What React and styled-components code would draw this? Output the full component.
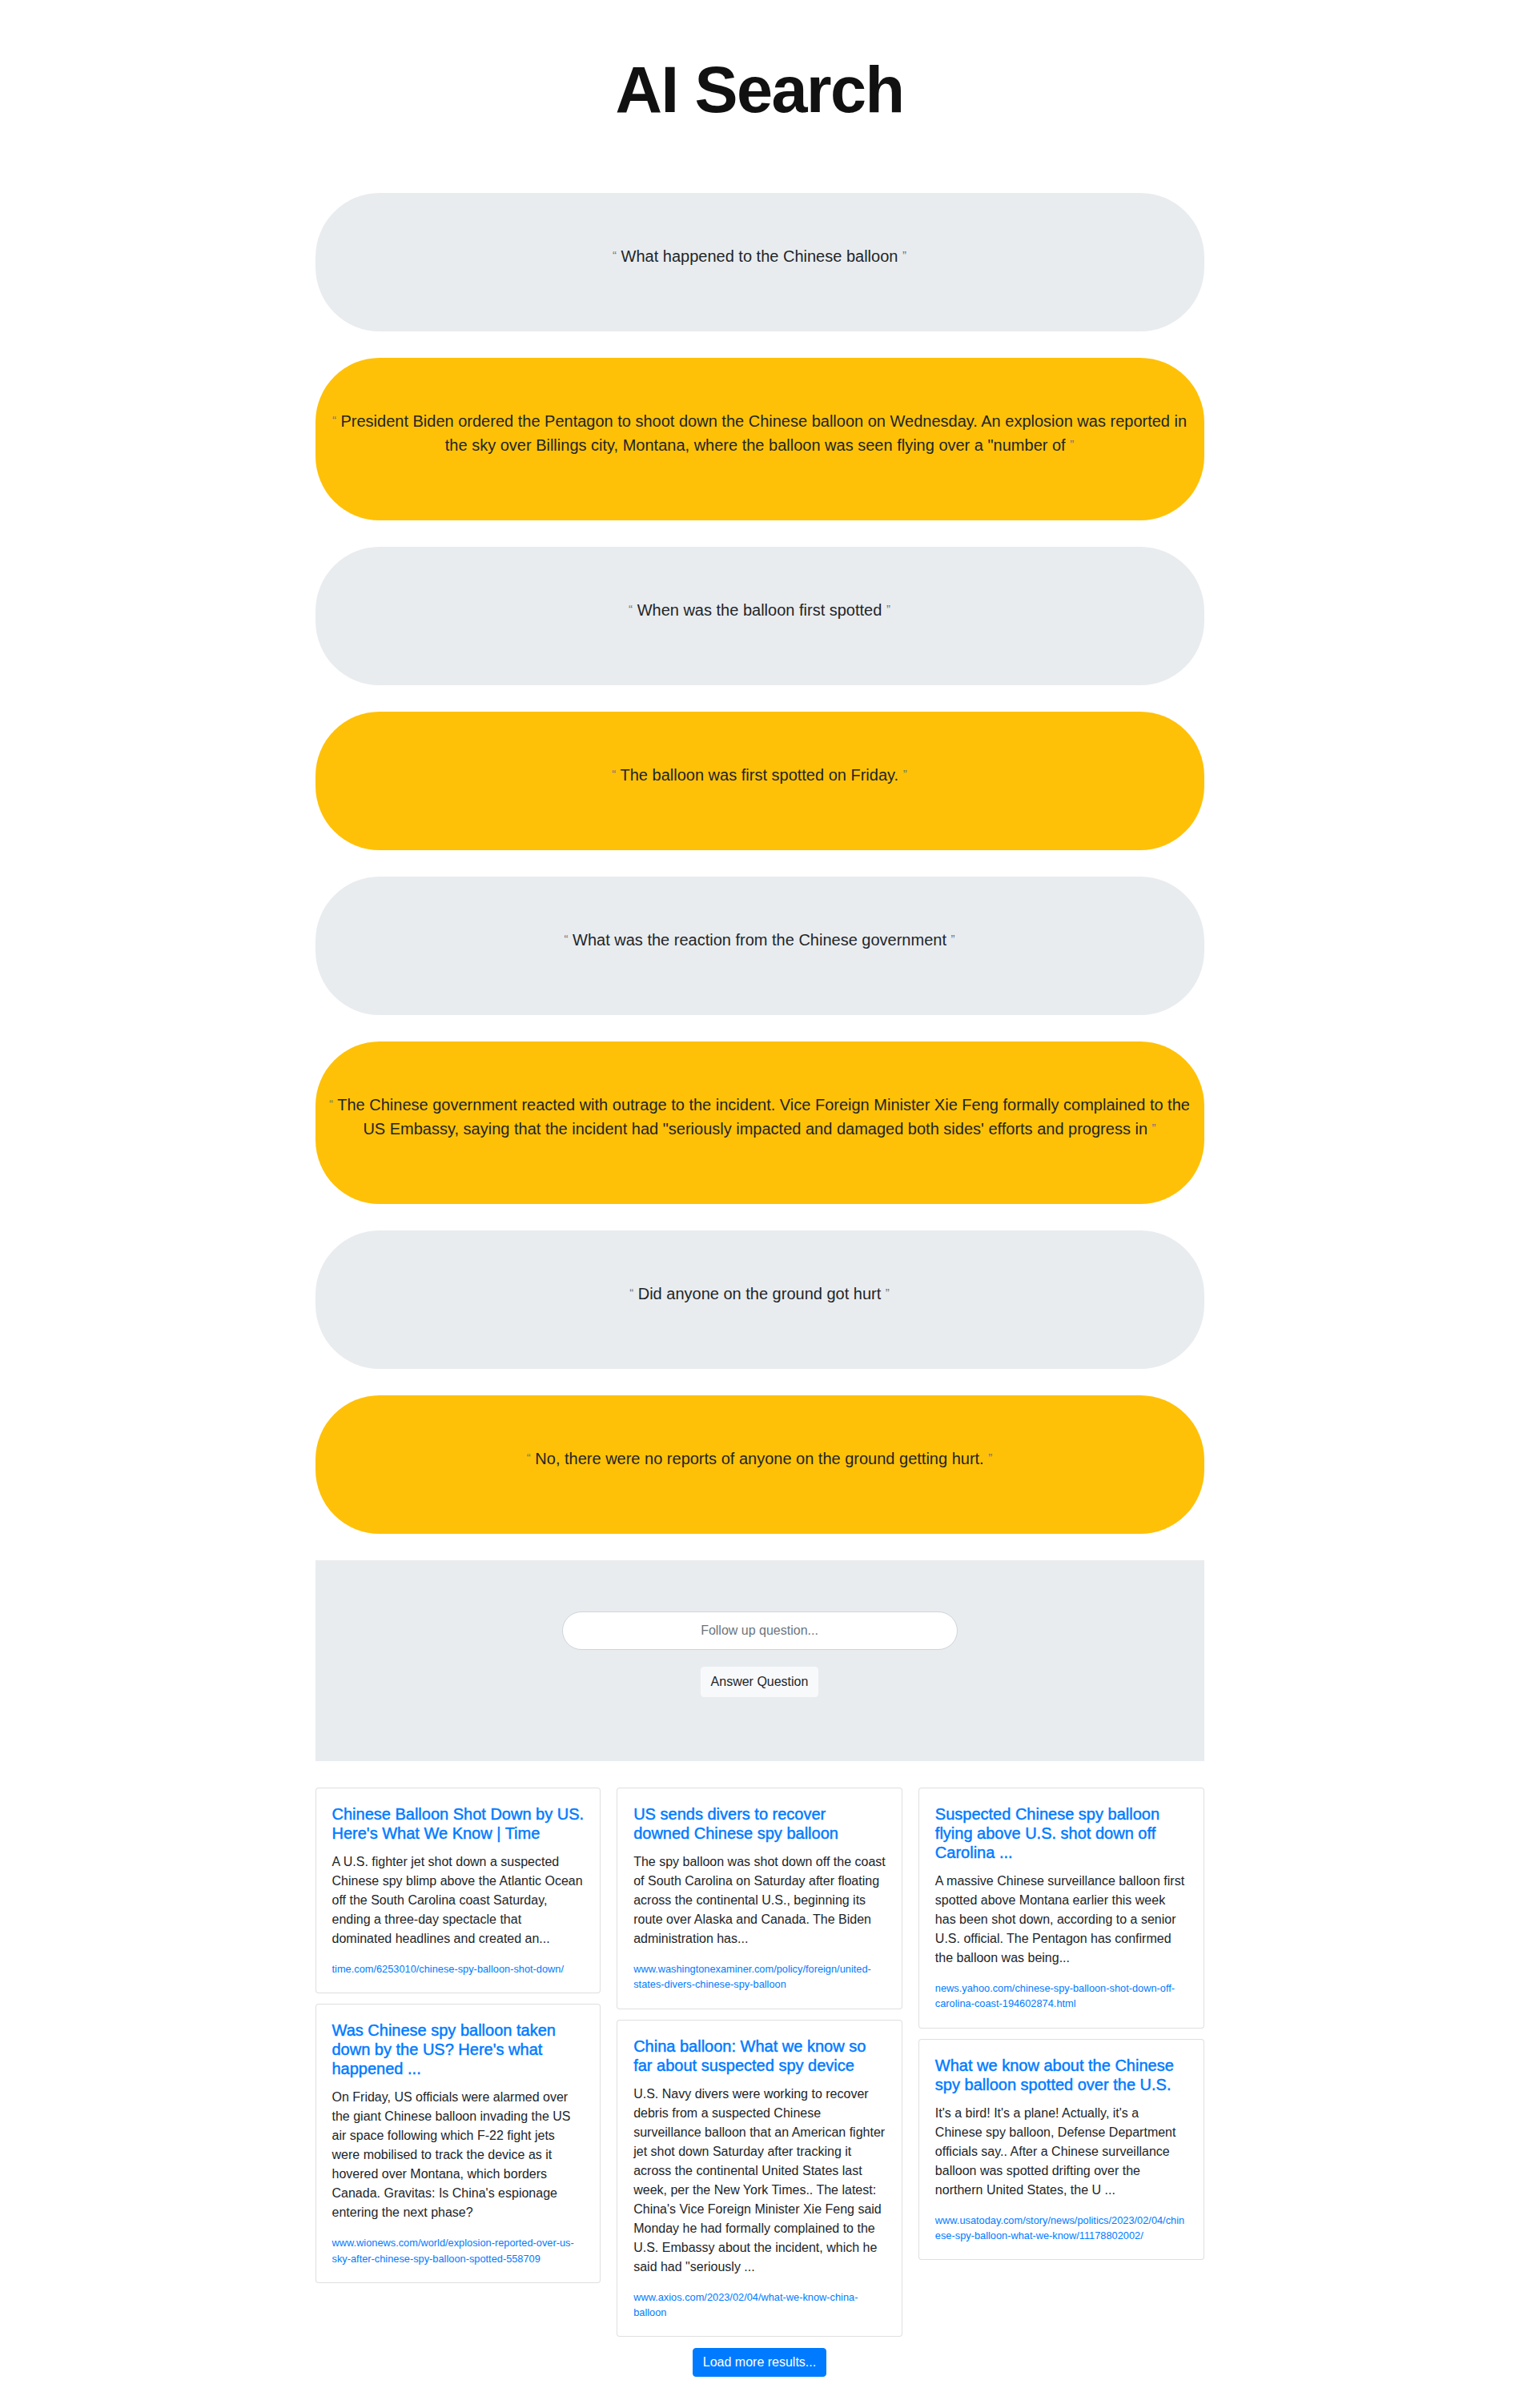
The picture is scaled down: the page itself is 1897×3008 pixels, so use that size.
import React from "react";
import styled, { createGlobalStyle } from "styled-components";

const GlobalStyle = createGlobalStyle`
  body {
    margin: 0;
    background: #fff;
    color: #212529;
    font-family: "Liberation Sans", Arial, sans-serif;
  }
  * { box-sizing: border-box; }
`;

const conversation = [
  { answer: false, text: "What happened to the Chinese balloon" },
  {
    answer: true,
    text: 'President Biden ordered the Pentagon to shoot down the Chinese balloon on Wednesday. An explosion was reported in the sky over Billings city, Montana, where the balloon was seen flying over a "number of',
  },
  { answer: false, text: "When was the balloon first spotted" },
  { answer: true, text: "The balloon was first spotted on Friday." },
  { answer: false, text: "What was the reaction from the Chinese government" },
  {
    answer: true,
    text: 'The Chinese government reacted with outrage to the incident. Vice Foreign Minister Xie Feng formally complained to the US Embassy, saying that the incident had "seriously impacted and damaged both sides\' efforts and progress in',
  },
  { answer: false, text: "Did anyone on the ground got hurt" },
  { answer: true, text: "No, there were no reports of anyone on the ground getting hurt." },
];

const columns = [
  [
    {
      title: "Chinese Balloon Shot Down by US. Here's What We Know | Time",
      text: "A U.S. fighter jet shot down a suspected Chinese spy blimp above the Atlantic Ocean off the South Carolina coast Saturday, ending a three-day spectacle that dominated headlines and created an...",
      url: "time.com/6253010/chinese-spy-balloon-shot-down/",
    },
    {
      title: "Was Chinese spy balloon taken down by the US? Here's what happened ...",
      text: "On Friday, US officials were alarmed over the giant Chinese balloon invading the US air space following which F-22 fight jets were mobilised to track the device as it hovered over Montana, which borders Canada. Gravitas: Is China's espionage entering the next phase?",
      url: "www.wionews.com/world/explosion-reported-over-us-sky-after-chinese-spy-balloon-spotted-558709",
    },
  ],
  [
    {
      title: "US sends divers to recover downed Chinese spy balloon",
      text: "The spy balloon was shot down off the coast of South Carolina on Saturday after floating across the continental U.S., beginning its route over Alaska and Canada. The Biden administration has...",
      url: "www.washingtonexaminer.com/policy/foreign/united-states-divers-chinese-spy-balloon",
    },
    {
      title: "China balloon: What we know so far about suspected spy device",
      text: 'U.S. Navy divers were working to recover debris from a suspected Chinese surveillance balloon that an American fighter jet shot down Saturday after tracking it across the continental United States last week, per the New York Times.. The latest: China\'s Vice Foreign Minister Xie Feng said Monday he had formally complained to the U.S. Embassy about the incident, which he said had "seriously ...',
      url: "www.axios.com/2023/02/04/what-we-know-china-balloon",
    },
  ],
  [
    {
      title: "Suspected Chinese spy balloon flying above U.S. shot down off Carolina ...",
      text: "A massive Chinese surveillance balloon first spotted above Montana earlier this week has been shot down, according to a senior U.S. official. The Pentagon has confirmed the balloon was being...",
      url: "news.yahoo.com/chinese-spy-balloon-shot-down-off-carolina-coast-194602874.html",
    },
    {
      title: "What we know about the Chinese spy balloon spotted over the U.S.",
      text: "It's a bird! It's a plane! Actually, it's a Chinese spy balloon, Defense Department officials say.. After a Chinese surveillance balloon was spotted drifting over the northern United States, the U ...",
      url: "www.usatoday.com/story/news/politics/2023/02/04/chinese-spy-balloon-what-we-know/11178802002/",
    },
  ],
];

export default function App() {
  return (
    <>
      <GlobalStyle />
      <Page>
        <Title>AI Search</Title>

        {conversation.map((item, i) => (
          <Bubble key={i} $answer={item.answer}>
            <BubbleText>
              <Quote>“</Quote> {item.text} <Quote>”</Quote>
            </BubbleText>
          </Bubble>
        ))}

        <FollowUp>
          <FollowInput type="text" placeholder="Follow up question..." />
          <LightButton type="button">Answer Question</LightButton>
        </FollowUp>

        <Columns>
          {columns.map((col, c) => (
            <Column key={c}>
              {col.map((card) => (
                <Card key={card.url}>
                  <CardTitle>{card.title}</CardTitle>
                  <CardText>{card.text}</CardText>
                  <CardLink href={"https://" + card.url}>{card.url}</CardLink>
                </Card>
              ))}
            </Column>
          ))}
        </Columns>

        <LoadMore type="button">Load more results...</LoadMore>
      </Page>
    </>
  );
}

const Page = styled.main`
  width: 1110px;
  margin: 0 auto;
  padding: 64px 0 40px;
`;

const Title = styled.h1`
  margin: 0 0 80px;
  text-align: center;
  font-family: "Liberation Sans", Arial, sans-serif;
  font-weight: 700;
  font-size: 81px;
  line-height: 1.2;
  letter-spacing: -1.5px;
  color: #111;
`;

const Bubble = styled.div`
  background: ${(p) => (p.$answer ? "#ffc107" : "#e9ecef")};
  border-radius: 80px;
  padding: 64px 16px 63px;
  margin-bottom: 33px;
  text-align: center;
`;

const BubbleText = styled.p`
  margin: 0 0 16px;
  font-size: 20px;
  line-height: 30px;
  color: #212529;
`;

const Quote = styled.span`
  font-size: 15px;
  line-height: 0;
  color: #6c757d;
  vertical-align: 3px;
`;

const FollowUp = styled.section`
  display: flex;
  flex-direction: column;
  align-items: center;
  background: #e9ecef;
  padding: 64px 32px;
  margin-bottom: 33px;
`;

const FollowInput = styled.input`
  width: 494px;
  height: 48px;
  margin-bottom: 21px;
  padding: 6px 12px;
  border: 1px solid #ced4da;
  border-radius: 24px;
  background: #fff;
  text-align: center;
  font-family: inherit;
  font-size: 16px;
  color: #495057;

  &::placeholder {
    color: #6c757d;
  }
`;

const LightButton = styled.button`
  margin-bottom: 16px;
  padding: 6px 12px;
  border: 1px solid #f8f9fa;
  border-radius: 4px;
  background: #f8f9fa;
  color: #212529;
  font-family: inherit;
  font-size: 16px;
  line-height: 24px;
`;

const Columns = styled.div`
  display: flex;
  align-items: flex-start;
  gap: 20px;
`;

const Column = styled.div`
  flex: 1;
  min-width: 0;
  display: flex;
  flex-direction: column;
  gap: 13px;
`;

const Card = styled.article`
  padding: 20px;
  border: 1px solid rgba(0, 0, 0, 0.125);
  border-radius: 4px;
  background: #fff;
  overflow-wrap: break-word;
`;

const CardTitle = styled.h5`
  margin: 0 0 12px;
  font-size: 20px;
  line-height: 1.2;
  font-weight: 500;
  color: #007bff;
  -webkit-text-stroke: 0.45px #007bff;
`;

const CardText = styled.p`
  margin: 0 0 16px;
  font-size: 16px;
  line-height: 24px;
`;

const CardLink = styled.a`
  display: block;
  font-size: 12.8px;
  line-height: 1.5;
  color: #007bff;
  text-decoration: none;
`;

const LoadMore = styled.button`
  display: block;
  margin: 14px auto 0;
  padding: 5px 12px;
  border: 1px solid #007bff;
  border-radius: 4px;
  background: #007bff;
  color: #fff;
  font-family: inherit;
  font-size: 16px;
  line-height: 24px;
`;
